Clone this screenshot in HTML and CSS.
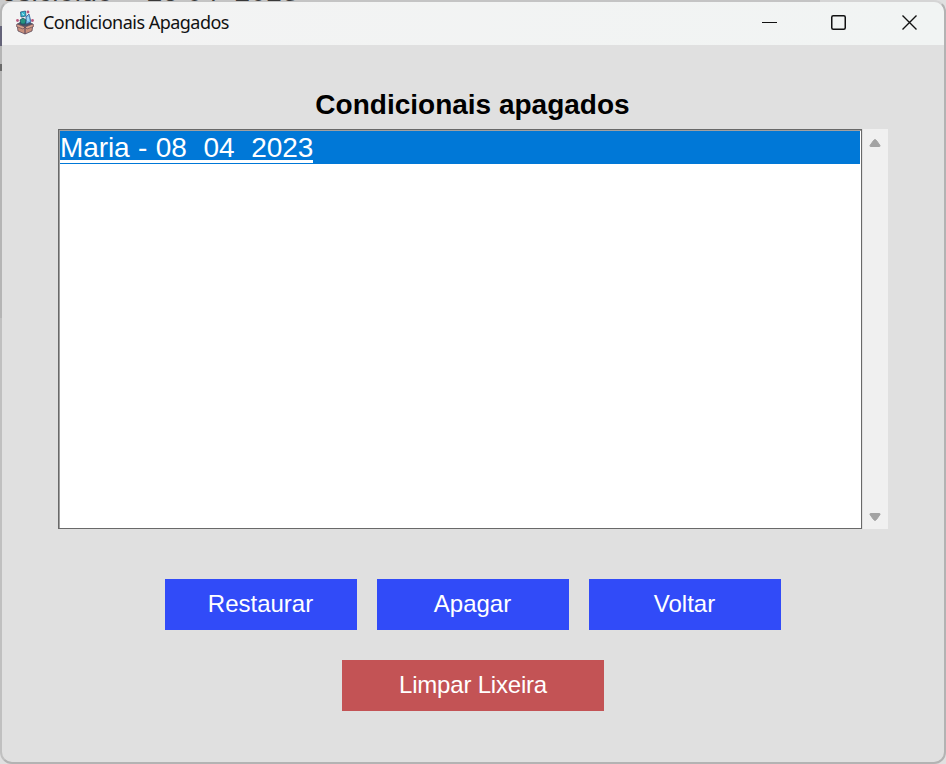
FILE: index.html
```html
<!DOCTYPE html>
<html lang="pt-BR">
<head>
<meta charset="utf-8">
<title>Condicionais Apagados</title>
<link rel="stylesheet" href="styles.css">
</head>
<body>
<div class="backdrop" aria-hidden="true">
  <div class="behind-edge"></div>
  <div class="behind-text">Josicleide -&nbsp; 25 04&nbsp; 2023</div>
  <div class="behind-mark"></div>
  <div class="behind-stroke"></div>
</div>
<div class="window">
  <header class="titlebar">
    <svg class="app-icon" width="18" height="25" viewBox="0 0 18 25">
      <path d="M1 14 9 17 17 14 16 21 9 24 2 21Z" fill="#c98f7b" stroke="#5c4a59" stroke-width=".8"/>
      <path d="M1 14 4 12H14L17 14 9 17Z" fill="#4a5366"/>
      <path d="M1 14 0.500 16.500 7 19 9 17 11 19 17.500 16.500 17 14 9 17Z" fill="#dba48d" stroke="#614a58" stroke-width=".7"/>
      <path d="M9 17V24" stroke="#504058"/>
      <path d="M4.500 2 9.500 1 10 6 5 7Z" fill="#32b6cd" stroke="#27577c" stroke-width=".8"/>
      <path d="M10 7 13 4 15 12 10 14Z" fill="#75bce9" stroke="#315990" stroke-width=".8"/>
      <path d="M4 10 7 8 10 10 9 14H5Z" fill="#259580" stroke="#194c62" stroke-width=".8"/>
      <circle cx="12" cy="2" r="1.400" fill="#b8577b"/>
      <circle cx="1.500" cy="10.500" r="1.400" fill="#b8577b"/>
      <circle cx="16.500" cy="10.500" r="1.400" fill="#b8577b"/>
      <path d="M6 3.500 8 5M12 7V11" stroke="#c7f1f5"/>
    </svg>
    <span class="window-title">Condicionais Apagados</span>
    <div class="controls">
      <svg width="16" height="16" viewBox="0 0 16 16"><path d="M0 7.500H15"/></svg>
      <svg width="16" height="16" viewBox="0 0 16 16"><rect x=".75" y=".75" width="13.500" height="13.500" rx="1.500" class="thick"/></svg>
      <svg width="16" height="16" viewBox="0 0 16 16"><path d="M.5.500 14.500 14.500M14.500.500.5 14.500" class="cross"/></svg>
    </div>
  </header>
  <main class="content">
    <h1>Condicionais apagados</h1>
    <div class="list-area">
      <div class="listbox"><div class="row"><span>Maria - 08&nbsp; 04&nbsp; 2023</span></div></div>
      <div class="scrollbar">
        <svg width="12" height="10" viewBox="0 0 12 10"><path d="M4.500 2.500Q6 .5 7.500 2.500L11 7.500Q11.300 8.500 10.500 8.500H1.500Q.7 8.500 1 7.500Z"/></svg>
        <svg width="12" height="10" viewBox="0 0 12 10"><path d="M1.500 1.500H10.500Q11.300 1.500 11 2.500L7.500 7.500Q6 9.500 4.500 7.500L1 2.500Q.7 1.500 1.500 1.500Z"/></svg>
      </div>
    </div>
    <div class="actions">
      <button>Restaurar</button>
      <button>Apagar</button>
      <button>Voltar</button>
    </div>
    <button class="danger">Limpar Lixeira</button>
  </main>
</div>
</body>
</html>
```
FILE: styles.css
```css
* { box-sizing: border-box; }
body {
  position: relative;
  width: 946px;
  height: 764px;
  margin: 0;
  overflow: hidden;
  background: #e0e0e0;
  font-family: "Liberation Sans", Arial, sans-serif;
}
.backdrop { position: absolute; inset: 0; overflow: hidden; }
.behind-edge { width: 820px; height: 318px; background: #cacaca; }
.behind-text {
  position: absolute;
  top: -24px;
  left: -13px;
  color: #111;
  font-size: 28px;
  line-height: 32px;
  letter-spacing: .3px;
  white-space: nowrap;
}
.behind-mark { position: absolute; top: 26px; left: 0; width: 2px; height: 20px; background: #292653; }
.behind-stroke { position: absolute; top: 64px; left: 0; width: 2px; height: 7px; background: #333; }
.window {
  position: relative;
  width: 946px;
  height: 764px;
  border: 2px solid #b3b3b3;
  border-top-color: #b3b3b340;
  border-left-color: #a0a0a080;
  border-radius: 12px;
  overflow: hidden;
  background: #e0e0e0;
  background-clip: padding-box;
}
.titlebar {
  display: flex;
  align-items: center;
  height: 43px;
  padding-left: 14px;
  background: linear-gradient(90deg, #f3f3f3, #f1f4f3);
}
.app-icon { margin-top: -3px; }
.window-title {
  margin: -3px 0 0 9px;
  color: #111;
  font: 18px/24px "Noto Sans", sans-serif;
  letter-spacing: -.52px;
}
.controls { display: flex; margin: -2px 26px 0 auto; }
.controls svg { fill: none; stroke: #111; stroke-width: 1; }
.controls svg:nth-child(2) { margin: 0 55px 0 53px; }
.controls .thick { stroke-width: 1.5; }
.controls .cross { stroke-width: 1.4; }
.content { display: flex; flex-direction: column; align-items: center; padding-top: 44px; }
h1 { margin: 0 1px 0 0; font-size: 28px; line-height: 32px; }
.list-area { display: flex; width: 830px; height: 400px; margin-top: 8px; }
.listbox {
  width: 804px;
  border: 1px solid #696969;
  box-shadow: inset 1px 1px #a0a0a0;
  padding: 1px;
  background: #fff;
}
.row {
  height: 33px;
  background: #0078d7;
  color: #fff;
  font-size: 28px;
  line-height: 33px;
  letter-spacing: -.08px;
  word-spacing: .7px;
  white-space: nowrap;
}
.row span { display: inline-block; width: 253px; height: 32px; border-bottom: 3px solid #fff; }
.scrollbar {
  display: flex;
  flex-direction: column;
  align-items: center;
  justify-content: space-between;
  width: 26px;
  padding: 9px 0 7px;
  background: linear-gradient(90deg, #e0e0e0 1px, #f0f0f0 1px);
}
.scrollbar path { fill: #a3a3a3; stroke: #a3a3a3; stroke-linejoin: round; }
.actions { display: flex; gap: 20px; margin: 50px 0 30px; }
button {
  width: 192px;
  height: 51px;
  padding: 0 1px 2px 0;
  border: 0;
  background: #314bf8;
  color: #fff;
  font: 24px/28px "Liberation Sans", Arial, sans-serif;
}
.danger { width: 262px; padding-right: 0; background: #c35355; letter-spacing: -.2px; }
```
